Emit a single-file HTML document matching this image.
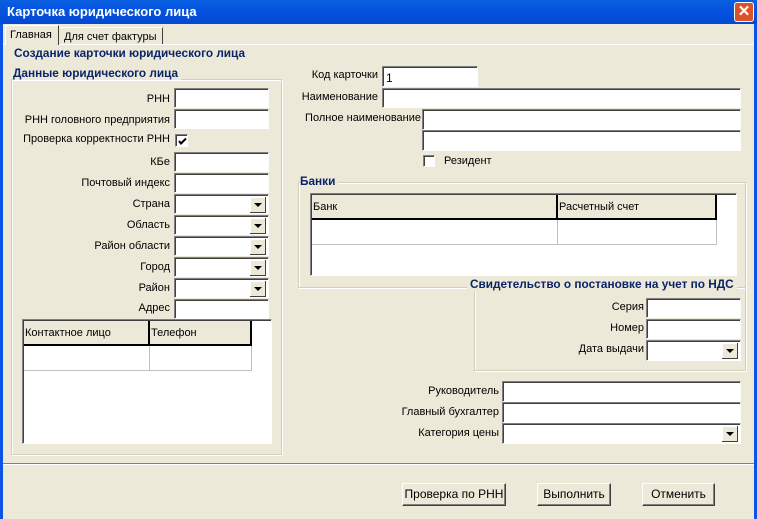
<!DOCTYPE html>
<html><head><meta charset="utf-8"><style>
*{margin:0;padding:0;box-sizing:border-box}
body{width:757px;height:519px;overflow:hidden;background:#ece9d8;font-family:"Liberation Sans",sans-serif;font-size:11px;color:#000;position:relative}
.a{position:absolute}
.title{left:0;top:0;width:757px;height:24px;background:linear-gradient(#0a5fe0,#0454e0 40%,#0349d0);color:#fff;font-weight:bold;font-size:13px;padding:4px 0 0 7px}
.close{left:734px;top:2px;width:20px;height:20px;background:#d9532d;border:1px solid #fff;border-radius:3px;color:#fff;font-size:15px;font-weight:bold;text-align:center;line-height:18px}
.lb{left:0;top:24px;width:3px;height:495px;background:#0c53e6}
.rb{left:754px;top:24px;width:3px;height:495px;background:#0c53e6}
.in{background:#fff;border-top:1px solid #808080;border-left:1px solid #808080;border-right:1px solid #fff;border-bottom:1px solid #fff;box-shadow:inset 1px 1px #404040}
.lbl{text-align:right;padding-top:2px}
.blue{color:#0a246a;font-weight:bold;font-size:11.8px}
.grp{border:1px solid #d0d0bf;box-shadow:1px 1px #fff inset,1px 1px #fff}
.dd{position:absolute;right:2px;top:2px;width:16px;height:16px;background:#ece9d8;border-right:1px solid #404040;border-bottom:1px solid #404040;box-shadow:inset 1px 1px #fff}
.dd:after{content:"";position:absolute;left:4px;top:6px;border-left:4px solid transparent;border-right:4px solid transparent;border-top:4px solid #000}
.btn{background:#ece9d8;border-top:1px solid #fff;border-left:1px solid #fff;border-right:1px solid #404040;border-bottom:1px solid #404040;box-shadow:inset -1px -1px #808080;text-align:center;line-height:20px;font-size:12px}
.hd{background:#ece9d8;border-right:2px solid #000;border-bottom:2px solid #000;padding:6px 0 0 1px;font-size:11px}
.cell{border-right:1px solid #c0c0c0;border-bottom:1px solid #c0c0c0;background:#fff}
.cb{background:#fff;border-top:1px solid #808080;border-left:1px solid #808080;border-right:1px solid #fff;border-bottom:1px solid #fff;box-shadow:inset 1px 1px #404040}
</style></head><body>
<div class="a title">Карточка юридического лица</div>
<div class="a close">✕</div>
<div class="a lb"></div><div class="a rb"></div>

<div class="a" style="left:3px;top:44px;width:751px;height:1px;background:#fff"></div>
<div class="a" style="left:5px;top:25px;width:54px;height:20px;background:#ece9d8;border-top:1px solid #fff;border-left:1px solid #fff;border-right:1px solid #404040;padding:3px 0 0 4px">Главная</div>
<div class="a" style="left:60px;top:27px;width:103px;height:17px;border-top:1px solid #fff;border-right:1px solid #404040;padding:3px 0 0 4px">Для счет фактуры</div>

<div class="a blue" style="left:14px;top:46px">Создание карточки юридического лица</div>

<div class="a grp" style="left:11px;top:79px;width:271px;height:376px"></div>
<div class="a blue" style="left:13px;top:66px;background:#ece9d8;padding-right:3px">Данные юридического лица</div>

<div class="a lbl" style="right:587px;top:91px">РНН</div>
<div class="a in" style="left:174px;top:88px;width:95px;height:20px"></div>
<div class="a lbl" style="right:587px;top:112px">РНН головного предприятия</div>
<div class="a in" style="left:174px;top:109px;width:95px;height:20px"></div>
<div class="a lbl" style="right:587px;top:131px">Проверка корректности РНН</div>
<div class="a cb" style="left:175px;top:134px;width:13px;height:13px">
<svg width="11" height="11" style="position:absolute;left:1px;top:1px"><path d="M2 5 L4 7.5 L9 2.5" stroke="#000" stroke-width="2" fill="none"/></svg></div>
<div class="a lbl" style="right:587px;top:154px">КБе</div>
<div class="a in" style="left:174px;top:152px;width:95px;height:20px"></div>
<div class="a lbl" style="right:587px;top:175px">Почтовый индекс</div>
<div class="a in" style="left:174px;top:173px;width:95px;height:20px"></div>
<div class="a lbl" style="right:587px;top:196px">Страна</div>
<div class="a in" style="left:174px;top:194px;width:95px;height:20px"><div class="dd"></div></div>
<div class="a lbl" style="right:587px;top:217px">Область</div>
<div class="a in" style="left:174px;top:215px;width:95px;height:20px"><div class="dd"></div></div>
<div class="a lbl" style="right:587px;top:238px">Район области</div>
<div class="a in" style="left:174px;top:236px;width:95px;height:20px"><div class="dd"></div></div>
<div class="a lbl" style="right:587px;top:259px">Город</div>
<div class="a in" style="left:174px;top:257px;width:95px;height:20px"><div class="dd"></div></div>
<div class="a lbl" style="right:587px;top:280px">Район</div>
<div class="a in" style="left:174px;top:278px;width:95px;height:20px"><div class="dd"></div></div>
<div class="a lbl" style="right:587px;top:300px">Адрес</div>
<div class="a in" style="left:174px;top:299px;width:95px;height:20px"></div>

<div class="a in" style="left:22px;top:319px;width:250px;height:125px"></div>
<div class="a hd" style="left:24px;top:321px;width:126px;height:25px">Контактное лицо</div>
<div class="a hd" style="left:150px;top:321px;width:102px;height:25px">Телефон</div>
<div class="a cell" style="left:24px;top:346px;width:126px;height:25px"></div>
<div class="a cell" style="left:150px;top:346px;width:102px;height:25px"></div>

<div class="a lbl" style="right:379px;top:67px">Код карточки</div>
<div class="a in" style="left:382px;top:66px;width:96px;height:21px;padding:4px 0 0 3px;font-size:12px">1</div>
<div class="a lbl" style="right:379px;top:89px">Наименование</div>
<div class="a in" style="left:382px;top:88px;width:359px;height:20px"></div>
<div class="a lbl" style="right:336px;top:110px">Полное наименование</div>
<div class="a in" style="left:422px;top:109px;width:319px;height:21px"></div>
<div class="a in" style="left:422px;top:130px;width:319px;height:21px"></div>
<div class="a cb" style="left:423px;top:155px;width:12px;height:12px"></div>
<div class="a" style="left:444px;top:155px">Резидент</div>

<div class="a grp" style="left:298px;top:182px;width:448px;height:106px"></div>
<div class="a blue" style="left:300px;top:174px;background:#ece9d8;padding-right:3px">Банки</div>
<div class="a in" style="left:310px;top:193px;width:427px;height:83px"></div>
<div class="a hd" style="left:312px;top:195px;width:246px;height:25px">Банк</div>
<div class="a hd" style="left:558px;top:195px;width:159px;height:25px">Расчетный счет</div>
<div class="a cell" style="left:312px;top:220px;width:246px;height:25px"></div>
<div class="a cell" style="left:558px;top:220px;width:159px;height:25px"></div>

<div class="a grp" style="left:474px;top:287px;width:272px;height:84px"></div>
<div class="a blue" style="left:467px;top:277px;background:#ece9d8;padding:0 3px;font-size:11.8px">Свидетельство о постановке на учет по НДС</div>
<div class="a lbl" style="right:113px;top:299px">Серия</div>
<div class="a in" style="left:646px;top:298px;width:95px;height:20px"></div>
<div class="a lbl" style="right:113px;top:320px">Номер</div>
<div class="a in" style="left:646px;top:319px;width:95px;height:20px"></div>
<div class="a lbl" style="right:113px;top:341px">Дата выдачи</div>
<div class="a in" style="left:646px;top:340px;width:95px;height:21px"><div class="dd"></div></div>

<div class="a lbl" style="right:258px;top:383px">Руководитель</div>
<div class="a in" style="left:502px;top:381px;width:239px;height:21px"></div>
<div class="a lbl" style="right:258px;top:404px">Главный бухгалтер</div>
<div class="a in" style="left:502px;top:402px;width:239px;height:21px"></div>
<div class="a lbl" style="right:258px;top:425px">Категория цены</div>
<div class="a in" style="left:502px;top:423px;width:239px;height:21px"><div class="dd"></div></div>

<div class="a" style="left:3px;top:463px;width:751px;height:1px;background:#808080"></div>
<div class="a" style="left:3px;top:464px;width:751px;height:1px;background:#fff"></div>

<div class="a btn" style="left:402px;top:483px;width:104px;height:23px">Проверка по РНН</div>
<div class="a btn" style="left:537px;top:483px;width:74px;height:23px">Выполнить</div>
<div class="a btn" style="left:642px;top:483px;width:73px;height:23px">Отменить</div>
</body></html>
